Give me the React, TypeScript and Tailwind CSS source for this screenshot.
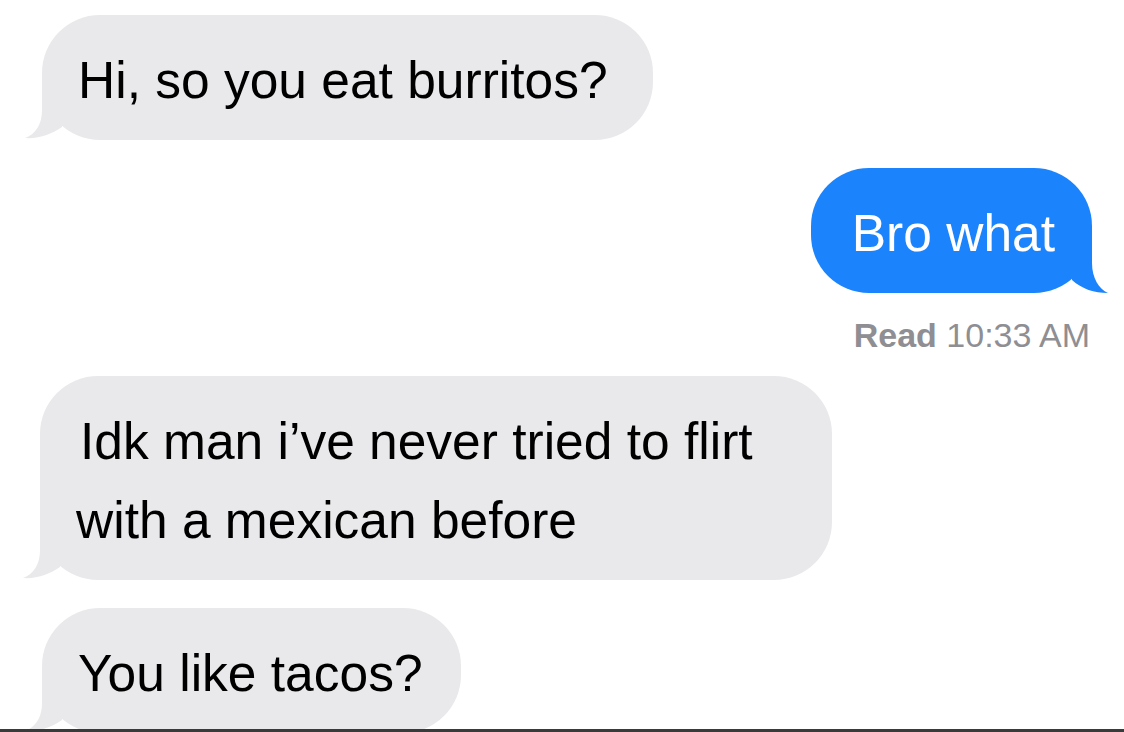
import type { ReactNode } from 'react'

const font = { fontFamily: '"Liberation Sans", Arial, sans-serif' }

function TailLeft() {
  return (
    <svg className="absolute bottom-0 left-[-20px] w-[60px] h-[60px]" viewBox="0 0 60 60">
      <path d="M20 0 L20 30 C20 44 14 54 3 58 C17 59 30 54 40 47 L40 0 Z" fill="#e9e9eb" />
    </svg>
  )
}

function TailRight() {
  return (
    <svg className="absolute bottom-0 right-[-20px] w-[60px] h-[60px] -scale-x-100" viewBox="0 0 60 60">
      <path d="M20 0 L20 30 C20 45 13 56 4 60 C18 60 30 56 40 47 L40 0 Z" fill="#1b84fc" />
    </svg>
  )
}

function Incoming({ children, className = 'w-fit pr-[38px]' }: { children: ReactNode; className?: string }) {
  return (
    <div className={`relative shrink-0 bg-[#e9e9eb] rounded-[58px] pl-[36px] pt-[26px] pb-[20px] ${className}`}>
      <TailLeft />
      <div className="relative text-[51.5px] leading-[79px] text-black whitespace-nowrap">{children}</div>
    </div>
  )
}

export default function App() {
  return (
    <div className="h-[732px] w-[1124px] bg-white flex flex-col overflow-hidden" style={font}>
      {/* thread */}
      <div className="flex-1 overflow-hidden flex flex-col items-start pt-[15px] pl-[42px] pr-[32px]">
        <Incoming className="w-fit pr-[45px]">Hi, so you eat burritos?</Incoming>

        {/* outgoing */}
        <div className="self-end mt-[28px] relative w-fit bg-[#1b84fc] rounded-[58px] pl-[41px] pr-[37px] pt-[26px] pb-[20px]">
          <TailRight />
          <div className="relative text-[51.5px] leading-[79px] text-white whitespace-nowrap">Bro what</div>
        </div>
        <div className="self-end mt-[22px] pr-[2px] text-[34px] leading-[40px] text-[#8e8e93]">
          <span className="font-semibold">Read</span> 10:33 AM
        </div>

        <Incoming className="mt-[21px] -ml-[2px] w-[792px]">
          <span className="ml-[4px]">Idk man i&rsquo;ve never tried to flirt</span>
          <br />
          with a mexican before
        </Incoming>

        <Incoming className="mt-[28px] w-fit pr-[38px]">You like tacos?</Incoming>
      </div>

      {/* bottom edge */}
      <div className="h-[3px] shrink-0 bg-[#3a3a3a]" />
    </div>
  )
}
